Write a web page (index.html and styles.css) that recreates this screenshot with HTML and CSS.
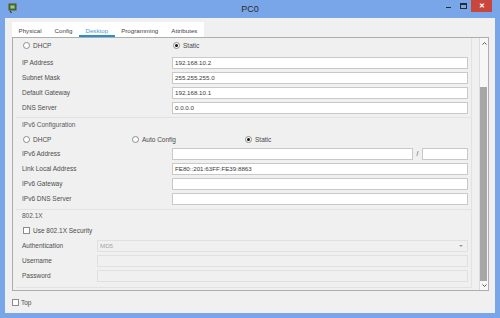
FILE: index.html
```html
<!DOCTYPE html>
<html lang="en">
<head>
    <meta charset="UTF-8">
    <title>PC0</title>
    <link rel="stylesheet" href="styles.css">
</head>
<body>
    <div class="window">
        <div class="titlebar">
            <div class="title-left">
                <svg class="app-icon" width="9" height="11" viewBox="0 0 9 11">
                    <rect x="1" y="1" width="7" height="6" fill="#2f7d32" stroke="#6b4a1e" stroke-width="1"/>
                    <rect x="2.5" y="2.5" width="4" height="3" fill="#8fd18a"/>
                    <path d="M2 8 L3.5 10" stroke="#333" stroke-width="1.2"/>
                </svg>
            </div>
            <div class="title">PC0</div>
            <div class="controls">
                <span class="ctl ctl-min"></span>
                <span class="ctl ctl-max"></span>
                <span class="ctl ctl-close">&#x2715;</span>
            </div>
        </div>

        <div class="client">
            <div class="tabs">
                <span class="tab">Physical</span>
                <span class="tab">Config</span>
                <span class="tab active">Desktop</span>
                <span class="tab">Programming</span>
                <span class="tab">Attributes</span>
            </div>

            <div class="panel">
                <div class="scroll">
                    <div class="group group-ipv4">
                        <div class="radio-row">
                            <span class="radio-item w150"><span class="radio"></span>DHCP</span>
                            <span class="radio-item"><span class="radio checked"></span>Static</span>
                        </div>
                        <div class="field first"><span class="label">IP Address</span><span class="input">192.168.10.2</span></div>
                        <div class="field"><span class="label">Subnet Mask</span><span class="input">255.255.255.0</span></div>
                        <div class="field"><span class="label">Default Gateway</span><span class="input">192.168.10.1</span></div>
                        <div class="field"><span class="label">DNS Server</span><span class="input">0.0.0.0</span></div>
                    </div>

                    <div class="group group-ipv6">
                        <div class="group-title">IPv6 Configuration</div>
                        <div class="radio-row small">
                            <span class="radio-item w109"><span class="radio"></span>DHCP</span>
                            <span class="radio-item w113"><span class="radio"></span>Auto Config</span>
                            <span class="radio-item"><span class="radio checked"></span>Static</span>
                        </div>
                        <div class="field">
                            <span class="label">IPv6 Address</span>
                            <span class="input"></span>
                            <span class="slash">/</span>
                            <span class="input prefix"></span>
                        </div>
                        <div class="field"><span class="label">Link Local Address</span><span class="input">FE80::201:63FF:FE39:8863</span></div>
                        <div class="field"><span class="label">IPv6 Gateway</span><span class="input"></span></div>
                        <div class="field"><span class="label">IPv6 DNS Server</span><span class="input"></span></div>
                    </div>

                    <div class="group group-8021x">
                        <div class="group-title short">802.1X</div>
                        <div class="check-row"><span class="checkbox"></span>Use 802.1X Security</div>
                        <div class="field narrow"><span class="label">Authentication</span><span class="input disabled combo">MD5<span class="combo-arrow"></span></span></div>
                        <div class="field narrow"><span class="label">Username</span><span class="input disabled"></span></div>
                        <div class="field narrow"><span class="label">Password</span><span class="input disabled"></span></div>
                    </div>
                </div>

                <div class="scrollbar">
                    <div class="sb-arrow sb-up">
                        <svg width="5" height="3" viewBox="0 0 5 3"><path d="M0.5 2.5 L2.5 0.5 L4.5 2.5" fill="none" stroke="#555" stroke-width="1"/></svg>
                    </div>
                    <div class="sb-track"><div class="sb-thumb"></div></div>
                    <div class="sb-arrow sb-down">
                        <svg width="5" height="3" viewBox="0 0 5 3"><path d="M0.5 0.5 L2.5 2.5 L4.5 0.5" fill="none" stroke="#555" stroke-width="1"/></svg>
                    </div>
                </div>
            </div>

            <div class="footer">
                <span class="checkbox"></span>Top
            </div>
        </div>
    </div>
</body>
</html>
```

FILE: styles.css
```css
body {
    margin: 0;
    width: 500px;
    height: 318px;
    overflow: hidden;
    background-color: #79a6e9;
    font-family: "Liberation Sans", Arial, sans-serif;
    color: #4a4a4a;
}

.window {
    display: flex;
    flex-direction: column;
    height: 318px;
}

/* title bar */
.titlebar {
    height: 18px;
    display: grid;
    grid-template-columns: 1fr auto 1fr;
    align-items: start;
}

.app-icon {
    display: block;
    margin: 3px 0 0 8px;
}

.title {
    font-size: 9px;
    line-height: 18px;
    color: #2b2b2b;
}

.controls {
    justify-self: end;
    display: flex;
    margin-right: 8px;
}

.ctl {
    height: 12px;
    display: flex;
    align-items: center;
    justify-content: center;
}

.ctl-min {
    width: 15px;
}

.ctl-min::before {
    content: "";
    width: 5px;
    height: 1px;
    margin-top: 3px;
    background: #2a2a2a;
}

.ctl-max {
    width: 15px;
}

.ctl-max::before {
    content: "";
    width: 5px;
    height: 3px;
    border: 1px solid #2a2a2a;
    border-top-width: 2px;
}

.ctl-close {
    width: 21px;
    background: #c9463d;
    color: #fff;
    font-size: 7px;
    font-weight: bold;
}

/* client area */
.client {
    flex: 1;
    margin: 0 5px 5px;
    padding: 4px 6px 0 7px;
    background: #f0f0f0;
    display: flex;
    flex-direction: column;
}

.tabs {
    display: flex;
    align-self: flex-start;
    height: 15px;
    background: #fff;
}

.tab {
    padding: 2px 6.5px 0;
    font-size: 6.2px;
    line-height: 13px;
    color: #444;
}

.tab.active {
    color: #4c9bd6;
    box-shadow: inset 0 -2px #2d8fc9;
}

.panel {
    box-sizing: border-box;
    height: 254px;
    border: 1px solid #adadad;
    display: flex;
}

.scroll {
    flex: 1;
    padding: 0 7px 0 3px;
    overflow: hidden;
}

.group {
    border: 1px solid #e2e2e2;
    border-top: none;
    border-left: none;
    padding: 0 3px 0 6px;
}

.group-ipv4 {
    padding-bottom: 2px;
}

.group-ipv6 {
    padding-bottom: 3px;
}

.group-8021x {
    padding-bottom: 4px;
}

.group-title {
    height: 14px;
    line-height: 14px;
    font-size: 6.5px;
    color: #5a5a5a;
}

.group-title.short {
    height: 12px;
    line-height: 11px;
}

.radio-row {
    display: flex;
    align-items: center;
    height: 15px;
    padding-left: 1px;
    margin-bottom: 2px;
    font-size: 6.5px;
}

.radio-row.small {
    height: 14px;
    margin-bottom: 0;
}

.radio-item {
    display: inline-flex;
    align-items: center;
}

.w150 {
    width: 150px;
}

.w109 {
    width: 109px;
}

.w113 {
    width: 113px;
}

.radio {
    box-sizing: border-box;
    width: 7px;
    height: 7px;
    margin-right: 3px;
    border: 1px solid #8c8c8c;
    border-radius: 50%;
    background: #fff;
    display: flex;
    align-items: center;
    justify-content: center;
}

.radio.checked::after {
    content: "";
    width: 3px;
    height: 3px;
    border-radius: 50%;
    background: #111;
}

.field {
    display: flex;
    align-items: center;
    height: 15px;
}

.label {
    width: 150px;
    flex-shrink: 0;
    font-size: 6.5px;
    color: #4e4e4e;
}

.field.narrow .label {
    width: 75px;
}

.input {
    box-sizing: border-box;
    flex: 1;
    height: 12px;
    padding-left: 2px;
    border: 1px solid #c9c9c9;
    background: #fff;
    font-size: 6.2px;
    line-height: 10px;
    color: #3a3a3a;
}

.input.prefix {
    flex: 0 0 46px;
}

.slash {
    width: 9px;
    text-align: center;
    font-size: 6.5px;
}

.input.disabled {
    background: #f0f0f0;
    border-color: #e0e0e0;
    color: #a5a5a5;
}

.combo {
    display: flex;
    justify-content: space-between;
    align-items: center;
}

.combo-arrow {
    width: 0;
    height: 0;
    margin-right: 4px;
    border-left: 2px solid transparent;
    border-right: 2px solid transparent;
    border-top: 2px solid #999;
}

.check-row {
    display: flex;
    align-items: center;
    height: 16px;
    padding-left: 1px;
    font-size: 6.5px;
}

.checkbox {
    box-sizing: border-box;
    width: 7px;
    height: 7px;
    margin-right: 3px;
    border: 1px solid #8c8c8c;
    background: #fff;
}

/* scrollbar */
.scrollbar {
    width: 9px;
    box-sizing: border-box;
    border-left: 1px solid #dcdcdc;
    background: #f7f7f7;
    display: flex;
    flex-direction: column;
}

.sb-arrow {
    display: flex;
    justify-content: center;
    align-items: center;
}

.sb-arrow svg {
    display: block;
}

.sb-up {
    height: 10px;
}

.sb-down {
    height: 9px;
}

.sb-track {
    flex: 1;
    display: flex;
    flex-direction: column;
    padding: 39px 1px 0 0;
}

.sb-thumb {
    flex: 1;
    background: #a7a7a7;
}

/* bottom row */
.footer {
    height: 22px;
    display: flex;
    align-items: center;
    font-size: 6.5px;
    color: #4e4e4e;
}

.footer .checkbox {
    margin-right: 2px;
}
```
